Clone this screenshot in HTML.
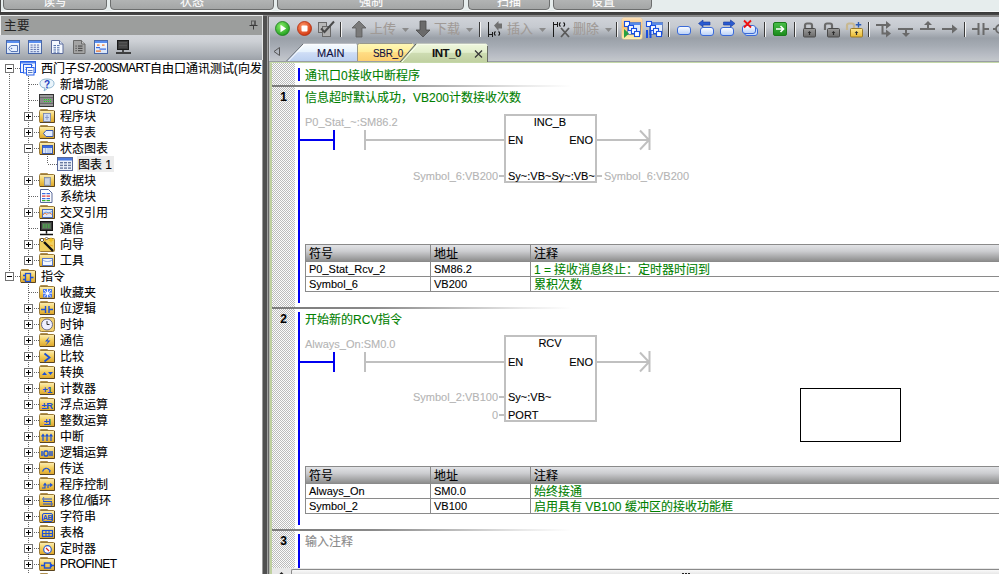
<!DOCTYPE html><html lang="zh-CN"><head><meta charset="utf-8"><style>
*{box-sizing:border-box}
html,body{margin:0;padding:0;width:999px;height:574px;overflow:hidden;background:#e6eded;font-family:"Liberation Sans",sans-serif;font-size:12px;color:#000;-webkit-text-stroke-width:0.1px}
.a{position:absolute}
svg.a{overflow:visible}
.rb{position:absolute;top:-5px;height:15px;border:1px solid #6c6e6e;border-radius:0 0 4px 4px;background:linear-gradient(#b8baba,#a4a6a6);box-shadow:0 1px 0 #f8fafa;color:#fff;font-size:12px;text-align:center;line-height:13px;overflow:hidden}
.t{position:absolute;white-space:nowrap;line-height:16px;height:16px}
.g{color:#008000}
.lg{color:#b4b4b4}
.bx{position:absolute;width:9px;height:9px;border:1px solid #747474;background:#fff}
.bx:before{content:"";position:absolute;left:1px;top:3px;width:5px;height:1px;background:#000}
.bx.p:after{content:"";position:absolute;left:3px;top:1px;width:1px;height:5px;background:#000}
.dv{position:absolute;width:1px;background:repeating-linear-gradient(#666 0 1px,transparent 1px 2px)}
.dh{position:absolute;height:1px;background:repeating-linear-gradient(90deg,#666 0 1px,transparent 1px 2px)}
.hatch{background-color:#f2f2f2;background-image:repeating-conic-gradient(#bcbcbc 0 25%,#fcfcfc 0 50%);background-size:2px 2px}
.rail{position:absolute;left:298px;width:2px;background:#0000f0}
.sep{position:absolute;left:272px;width:727px;height:2px;background:linear-gradient(90deg,#7a7a7a 0px,#8a8a8a 100px,#a0a0a0 140px,#e8e8e8 250px,#fff 300px)}
.num{position:absolute;left:272px;width:23px;text-align:center;font-weight:bold;font-size:12px;line-height:14px}
.box{position:absolute;border:2px solid #c0c0c0;background:#fff}
.wl{position:absolute;height:2px;background:#c0c0c0}
.tb{position:absolute;border-collapse:collapse;font-size:12px}
.tbl{position:absolute;border:1px solid #8a8a8a;background:#fff}
.th{position:absolute;background:linear-gradient(#e2e3e6,#cbcccf 40%,#8e8e8e)}
.cl{position:absolute;background:#8a8a8a}
</style></head><body>
<div class="a" style="left:0;top:0;width:999px;height:11px;background:#e6eded"></div>
<div class="rb" style="left:3px;width:104px">读写</div>
<div class="rb" style="left:110px;width:164px">状态</div>
<div class="rb" style="left:277px;width:187px">强制</div>
<div class="rb" style="left:468px;width:82px">扫描</div>
<div class="rb" style="left:553px;width:99px">设置</div>
<div class="a" style="left:0;top:11px;width:999px;height:1px;background:#f6f8f8"></div>
<div class="a" style="left:0;top:0;width:1px;height:16px;background:#4a4a4a"></div>
<div class="a" style="left:0;top:12px;width:999px;height:3px;background:linear-gradient(#383838,#484848)"></div>
<div class="a" style="left:0;top:15px;width:263px;height:1px;background:#e8eaea"></div>
<div class="a" style="left:263px;top:15px;width:736px;height:2px;background:#888"></div>
<div class="a" style="left:0;top:16px;width:263px;height:558px;background:#fff;overflow:hidden">
<div class="a" style="left:0;top:0;width:263px;height:19px;background:#9c9e9d;border-left:1px solid #f0f0f0"></div>
<div class="t" style="left:4px;top:2px;color:#262626;font-size:12.5px">主要</div>
<svg class="a" style="left:249px;top:4px" width="9" height="10"><rect x="2" y="0.5" width="5" height="4.5" fill="#5a5a5a"/><rect x="3" y="1.5" width="2" height="3" fill="#9c9e9d"/><path d="M0.5 5.5h8M4.5 5.5v4" stroke="#3a3a3a" stroke-width="1"/></svg>
<div class="a" style="left:0;top:19px;width:263px;height:25px;background:linear-gradient(#d2d5da,#cdd0d5 25%,#c0c4c9 45%,#aaafb5 80%,#9ca1a8)"></div>
</div>
<svg class="a" style="left:6px;top:40px" width="14" height="14"><defs><linearGradient id="wb1" x1="0" y1="0" x2="0" y2="1"><stop offset="0" stop-color="#ffffff"/><stop offset="1" stop-color="#d4e2f8"/></linearGradient></defs><rect x="0.5" y="0.5" width="13" height="13" fill="url(#wb1)" stroke="#4a68a8"/><rect x="1" y="1" width="12" height="2" fill="#5a8ef0"/><path d="M2.5 8.5l2.5-3h6.5v6H5z" fill="#e8f0ff" stroke="#5a78b8"/><circle cx="5.5" cy="8.5" r=".8" fill="#5a78b8"/></svg>
<svg class="a" style="left:28px;top:40px" width="14" height="14"><defs><linearGradient id="wb2" x1="0" y1="0" x2="0" y2="1"><stop offset="0" stop-color="#ffffff"/><stop offset="1" stop-color="#d4e2f8"/></linearGradient></defs><rect x="0.5" y="0.5" width="13" height="13" fill="url(#wb2)" stroke="#4a68a8"/><rect x="1" y="1" width="12" height="2" fill="#5a8ef0"/><rect x="2.5" y="4.5" width="2.2" height="1.1" fill="#6a7ab0"/><rect x="5.7" y="4.5" width="2.2" height="1.1" fill="#6a7ab0"/><rect x="8.9" y="4.5" width="2.2" height="1.1" fill="#6a7ab0"/><rect x="2.5" y="6.7" width="2.2" height="1.1" fill="#6a7ab0"/><rect x="5.7" y="6.7" width="2.2" height="1.1" fill="#6a7ab0"/><rect x="8.9" y="6.7" width="2.2" height="1.1" fill="#6a7ab0"/><rect x="2.5" y="8.9" width="2.2" height="1.1" fill="#6a7ab0"/><rect x="5.7" y="8.9" width="2.2" height="1.1" fill="#6a7ab0"/><rect x="8.9" y="8.9" width="2.2" height="1.1" fill="#6a7ab0"/><rect x="2.5" y="11.100000000000001" width="2.2" height="1.1" fill="#6a7ab0"/><rect x="5.7" y="11.100000000000001" width="2.2" height="1.1" fill="#6a7ab0"/><rect x="8.9" y="11.100000000000001" width="2.2" height="1.1" fill="#6a7ab0"/></svg>
<svg class="a" style="left:51px;top:40px" width="13" height="14"><path d="M0.5 0.5h8l3.5 3.5v9.5H0.5z" fill="#f4f8ff" stroke="#5a6a9a"/><path d="M8.5 0.5v3.5h3.5" fill="#dde6f8" stroke="#5a6a9a"/><rect x="2.5" y="5.0" width="2.5" height="1.1" fill="#5a78b0"/><rect x="6.0" y="5.0" width="2.5" height="1.1" fill="#5a78b0"/><rect x="2.5" y="7.2" width="2.5" height="1.1" fill="#5a78b0"/><rect x="6.0" y="7.2" width="2.5" height="1.1" fill="#5a78b0"/><rect x="2.5" y="9.4" width="2.5" height="1.1" fill="#5a78b0"/><rect x="6.0" y="9.4" width="2.5" height="1.1" fill="#5a78b0"/><rect x="2.5" y="11.600000000000001" width="2.5" height="1.1" fill="#5a78b0"/><rect x="6.0" y="11.600000000000001" width="2.5" height="1.1" fill="#5a78b0"/></svg>
<svg class="a" style="left:73px;top:40px" width="13" height="14"><path d="M0.5 0.5h8l3.5 3.5v9.5H0.5z" fill="#a4a4a4" stroke="#6a6a6a"/><path d="M8.5 0.5v3.5h3.5" fill="#c8c8c8" stroke="#6a6a6a"/><rect x="2.5" y="5.5" width="1.2" height="1.1" fill="#4a4a4a"/><rect x="5" y="5.5" width="4.5" height="1.1" fill="#4a4a4a"/><rect x="2.5" y="7.8" width="1.2" height="1.1" fill="#4a4a4a"/><rect x="5" y="7.8" width="4.5" height="1.1" fill="#4a4a4a"/><rect x="2.5" y="10.1" width="1.2" height="1.1" fill="#4a4a4a"/><rect x="5" y="10.1" width="4.5" height="1.1" fill="#4a4a4a"/></svg>
<svg class="a" style="left:94px;top:40px" width="14" height="14"><defs><linearGradient id="wb3" x1="0" y1="0" x2="0" y2="1"><stop offset="0" stop-color="#ffffff"/><stop offset="1" stop-color="#d4e2f8"/></linearGradient></defs><rect x="0.5" y="0.5" width="13" height="13" fill="url(#wb3)" stroke="#4a68a8"/><rect x="1" y="1" width="12" height="2" fill="#5a8ef0"/><rect x="3" y="4.5" width="2.5" height="1.2" fill="#f07020"/><rect x="8" y="4.5" width="2.5" height="1.2" fill="#f07020"/><rect x="2" y="7" width="4" height="1.2" fill="#3a6ae0"/><rect x="5.5" y="8.5" width="6.5" height="1.2" fill="#3a6ae0"/><rect x="2" y="10.5" width="5" height="1.2" fill="#f07020"/></svg>
<svg class="a" style="left:115px;top:40px" width="17" height="14"><rect x="2.5" y="0.5" width="11" height="9" fill="#3a3a3a" stroke="#1a1a1a"/><path d="M4 2.5h8M4 4h8M4 5.5h8M4 7h8" stroke="#6a6a6a" stroke-width=".6"/><path d="M8 10v2M1 13h15" stroke="#1a1a1a" stroke-width="1.4"/></svg>
<div class="dv" style="left:9px;top:74px;height:198px"></div>
<div class="dv" style="left:28px;top:76px;height:184px"></div>
<div class="dv" style="left:28px;top:282px;height:292px"></div>
<div class="dv" style="left:47px;top:154px;height:10px"></div>
<div class="dh" style="left:15px;top:68px;width:5px"></div>
<div class="bx m" style="left:5px;top:64px"></div>
<svg class="a" style="left:20px;top:61px" width="17" height="15"><rect x="0.5" y="0.5" width="15" height="11" fill="#f2f6ff" stroke="#2a62e8"/><rect x="1" y="1" width="14" height="1.5" fill="#5a8af0"/><path d="M9 4.5h4M9 6.5h4" stroke="#8aa8e0"/><rect x="3.5" y="3.5" width="8" height="8.5" fill="#f2f6ff" stroke="#2a62e8"/><path d="M5 6.5h4M5 8.5h4" stroke="#8aa8e0"/><rect x="6.5" y="6.5" width="7.5" height="7.5" fill="#f6f9ff" stroke="#2a62e8"/><path d="M8 9.5h4.5M8 11.5h4.5" stroke="#5a7ac0"/></svg>
<div class="t" style="left:41px;top:61px;font-size:12px">西门子<span style="letter-spacing:-0.7px;position:relative;top:-1px">S7-200SMART</span>自由口通讯测试(向发送</div>
<div class="dh" style="left:29px;top:84px;width:10px"></div>
<svg class="a" style="left:39px;top:78px" width="16" height="14"><path d="M8 1C3 1 1 3 1 5.5S3 10 6 10l-1 3 4-3c4 0 6-2 6-4.5S13 1 8 1z" fill="#eaf4fb" stroke="#8ab4d0"/><text x="8" y="9.5" font-size="10" font-weight="bold" fill="#2440c0" text-anchor="middle" font-family="Liberation Sans">?</text></svg>
<div class="t" style="left:60px;top:77px;font-size:12px">新增功能</div>
<div class="dh" style="left:29px;top:100px;width:10px"></div>
<svg class="a" style="left:39px;top:94px" width="15" height="13"><rect x="0.5" y="0.5" width="14" height="12" fill="#6a6a6a" stroke="#333"/><rect x="1" y="1" width="13" height="2" fill="#9a9a9a"/><rect x="1" y="4" width="13" height="5" fill="#8a8a8a"/><path d="M5 5.5h7M5 7.5h7" stroke="#20e020" stroke-dasharray="1 1"/><rect x="1" y="10" width="13" height="2" fill="#9a9a9a"/></svg>
<div class="t" style="left:60px;top:93px;font-size:12px"><span style="letter-spacing:-0.6px;position:relative;top:-1px">CPU ST20</span></div>
<div class="dh" style="left:34px;top:116px;width:5px"></div>
<div class="bx p" style="left:24px;top:112px"></div>
<svg class="a" style="left:39px;top:109px" width="17" height="15"><defs><linearGradient id="fg1" x1="0" y1="0" x2="0" y2="1"><stop offset="0" stop-color="#fcefb8"/><stop offset=".45" stop-color="#f4d060"/><stop offset="1" stop-color="#dca428"/></linearGradient></defs><path d="M1.5 0.5h7l1 1.5h-8.5z" fill="#f2e4b0" stroke="#b09050" stroke-width="1"/><rect x="0.5" y="1.5" width="15" height="12" rx="1" fill="url(#fg1)" stroke="#9a7a38"/><path d="M1 13.5h14.5V2" stroke="#5a4420" stroke-width="1" fill="none"/><rect x="4.5" y="4.5" width="7" height="8" fill="#d0dcf4" stroke="#7080b0" stroke-width=".8"/><path d="M6 8.5h4M8 6v5" stroke="#8090c0" stroke-width=".8"/></svg>
<div class="t" style="left:60px;top:109px;font-size:12px">程序块</div>
<div class="dh" style="left:34px;top:132px;width:5px"></div>
<div class="bx p" style="left:24px;top:128px"></div>
<svg class="a" style="left:39px;top:125px" width="17" height="15"><defs><linearGradient id="fg2" x1="0" y1="0" x2="0" y2="1"><stop offset="0" stop-color="#fcefb8"/><stop offset=".45" stop-color="#f4d060"/><stop offset="1" stop-color="#dca428"/></linearGradient></defs><path d="M1.5 0.5h7l1 1.5h-8.5z" fill="#f2e4b0" stroke="#b09050" stroke-width="1"/><rect x="0.5" y="1.5" width="15" height="12" rx="1" fill="url(#fg2)" stroke="#9a7a38"/><path d="M1 13.5h14.5V2" stroke="#5a4420" stroke-width="1" fill="none"/><path d="M4.5 8.5l2.5-3h7v6H7z" fill="#e4eeff" stroke="#3a5ab0"/></svg>
<div class="t" style="left:60px;top:125px;font-size:12px">符号表</div>
<div class="dh" style="left:34px;top:148px;width:5px"></div>
<div class="bx m" style="left:24px;top:144px"></div>
<svg class="a" style="left:39px;top:141px" width="17" height="15"><defs><linearGradient id="fg3" x1="0" y1="0" x2="0" y2="1"><stop offset="0" stop-color="#fcefb8"/><stop offset=".45" stop-color="#f4d060"/><stop offset="1" stop-color="#dca428"/></linearGradient></defs><path d="M1.5 0.5h7l1 1.5h-8.5z" fill="#f2e4b0" stroke="#b09050" stroke-width="1"/><rect x="0.5" y="1.5" width="15" height="12" rx="1" fill="url(#fg3)" stroke="#9a7a38"/><path d="M1 13.5h14.5V2" stroke="#5a4420" stroke-width="1" fill="none"/><rect x="3.5" y="4.5" width="10" height="8" fill="#d8e4f8" stroke="#3a5ab0"/><rect x="4" y="5" width="9" height="2" fill="#3a6ae0"/><path d="M6.5 7v5M9 7v5M11 7v5" stroke="#9ab0d8" stroke-width=".8"/></svg>
<div class="t" style="left:60px;top:141px;font-size:12px">状态图表</div>
<div class="dh" style="left:48px;top:164px;width:9px"></div>
<svg class="a" style="left:57px;top:157px" width="16" height="14"><rect x="0.5" y="0.5" width="15" height="13" fill="#eef2fa" stroke="#5a6a9a"/><rect x="1" y="1" width="14" height="2.5" fill="#4a7ae0"/><rect x="3" y="5.0" width="3" height="1.4" fill="#6a7aa0"/><rect x="7" y="5.0" width="3" height="1.4" fill="#6a7aa0"/><rect x="11" y="5.0" width="3" height="1.4" fill="#6a7aa0"/><rect x="3" y="7.7" width="3" height="1.4" fill="#6a7aa0"/><rect x="7" y="7.7" width="3" height="1.4" fill="#6a7aa0"/><rect x="11" y="7.7" width="3" height="1.4" fill="#6a7aa0"/><rect x="3" y="10.4" width="3" height="1.4" fill="#6a7aa0"/><rect x="7" y="10.4" width="3" height="1.4" fill="#6a7aa0"/><rect x="11" y="10.4" width="3" height="1.4" fill="#6a7aa0"/></svg>
<div class="a" style="left:77px;top:156px;width:37px;height:16px;background:#ececec"></div>
<div class="t" style="left:78px;top:157px;font-size:12px">图表 1</div>
<div class="dh" style="left:34px;top:180px;width:5px"></div>
<div class="bx p" style="left:24px;top:176px"></div>
<svg class="a" style="left:39px;top:173px" width="17" height="15"><defs><linearGradient id="fg4" x1="0" y1="0" x2="0" y2="1"><stop offset="0" stop-color="#fcefb8"/><stop offset=".45" stop-color="#f4d060"/><stop offset="1" stop-color="#dca428"/></linearGradient></defs><path d="M1.5 0.5h7l1 1.5h-8.5z" fill="#f2e4b0" stroke="#b09050" stroke-width="1"/><rect x="0.5" y="1.5" width="15" height="12" rx="1" fill="url(#fg4)" stroke="#9a7a38"/><path d="M1 13.5h14.5V2" stroke="#5a4420" stroke-width="1" fill="none"/><rect x="5.5" y="4.5" width="6" height="8" fill="#b8c4d8" stroke="#7a88a8" stroke-width=".8"/><path d="M7 6v5M9 6v5" stroke="#e8eef8" stroke-width=".8"/></svg>
<div class="t" style="left:60px;top:173px;font-size:12px">数据块</div>
<div class="dh" style="left:29px;top:196px;width:10px"></div>
<svg class="a" style="left:40px;top:189px" width="13" height="14"><path d="M0.5 0.5h8l3.5 3.5v9.5H0.5z" fill="#fbfcff" stroke="#5a6a9a"/><rect x="2" y="4" width="3.5" height="1.2" fill="#3a6ae0"/><rect x="6.5" y="4" width="3.5" height="1.2" fill="#3a6ae0"/><rect x="2" y="6.5" width="3.5" height="1.2" fill="#e03030"/><rect x="6.5" y="6.5" width="3.5" height="1.2" fill="#e03030"/><rect x="2" y="9" width="3.5" height="1.2" fill="#3a6ae0"/><rect x="6.5" y="9" width="3.5" height="1.2" fill="#3a6ae0"/><rect x="2" y="11" width="3.5" height="1.2" fill="#30b030"/><rect x="6.5" y="11" width="3.5" height="1.2" fill="#30b030"/></svg>
<div class="t" style="left:60px;top:189px;font-size:12px">系统块</div>
<div class="dh" style="left:34px;top:212px;width:5px"></div>
<div class="bx p" style="left:24px;top:208px"></div>
<svg class="a" style="left:39px;top:205px" width="17" height="15"><defs><linearGradient id="fg5" x1="0" y1="0" x2="0" y2="1"><stop offset="0" stop-color="#fcefb8"/><stop offset=".45" stop-color="#f4d060"/><stop offset="1" stop-color="#dca428"/></linearGradient></defs><path d="M1.5 0.5h7l1 1.5h-8.5z" fill="#f2e4b0" stroke="#b09050" stroke-width="1"/><rect x="0.5" y="1.5" width="15" height="12" rx="1" fill="url(#fg5)" stroke="#9a7a38"/><path d="M1 13.5h14.5V2" stroke="#5a4420" stroke-width="1" fill="none"/><rect x="3.5" y="4.5" width="10" height="8" fill="#dce8fa" stroke="#4a6ab8"/><path d="M4 10l2-2 2 1.5 2-2 3 2" stroke="#f08040" fill="none"/><path d="M4 8.5l3-1.5 3 1 3-1.5" stroke="#4a8ae0" fill="none" stroke-width=".8"/></svg>
<div class="t" style="left:60px;top:205px;font-size:12px">交叉引用</div>
<div class="dh" style="left:29px;top:228px;width:10px"></div>
<svg class="a" style="left:39px;top:221px" width="16" height="15"><rect x="1.5" y="0.5" width="12" height="9" fill="#3a3a3a" stroke="#111"/><rect x="3" y="2" width="9" height="6" fill="#5a6a5a"/><path d="M4 4h7M4 6h7" stroke="#40d040" stroke-dasharray="1.5 1"/><path d="M7.5 10v2.5M1 13.5h13" stroke="#111" stroke-width="1.5"/></svg>
<div class="t" style="left:60px;top:221px;font-size:12px">通信</div>
<div class="dh" style="left:34px;top:244px;width:5px"></div>
<div class="bx p" style="left:24px;top:240px"></div>
<svg class="a" style="left:39px;top:237px" width="16" height="15"><rect x="0.5" y="1.5" width="15" height="13" rx="1" fill="#f0d060" stroke="#9a7a38"/><path d="M5 5l9 9" stroke="#111" stroke-width="2.4"/><path d="M1 3l2-2 2 2-2 2z M6 1.5l1.5-1.5 1.5 1.5-1.5 1.5z" fill="#fff" stroke="#222" stroke-width=".7"/><path d="M12 0l1 2 2 1-2 1-1 2-1-2-2-1 2-1z" fill="#f0c020"/><path d="M5 1l2 3M14 9l-3-1" stroke="#f0a020"/></svg>
<div class="t" style="left:60px;top:237px;font-size:12px">向导</div>
<div class="dh" style="left:34px;top:260px;width:5px"></div>
<div class="bx p" style="left:24px;top:256px"></div>
<svg class="a" style="left:39px;top:253px" width="17" height="15"><defs><linearGradient id="fg6" x1="0" y1="0" x2="0" y2="1"><stop offset="0" stop-color="#fcefb8"/><stop offset=".45" stop-color="#f4d060"/><stop offset="1" stop-color="#dca428"/></linearGradient></defs><path d="M1.5 0.5h7l1 1.5h-8.5z" fill="#f2e4b0" stroke="#b09050" stroke-width="1"/><rect x="0.5" y="1.5" width="15" height="12" rx="1" fill="url(#fg6)" stroke="#9a7a38"/><path d="M1 13.5h14.5V2" stroke="#5a4420" stroke-width="1" fill="none"/><rect x="3.5" y="5.5" width="10" height="7" fill="#f4f8ff" stroke="#5a7ac8"/><path d="M4 7c2 2 7 2 9 0" stroke="#8aa8e0" fill="none"/></svg>
<div class="t" style="left:60px;top:253px;font-size:12px">工具</div>
<div class="dh" style="left:15px;top:276px;width:5px"></div>
<div class="bx m" style="left:5px;top:272px"></div>
<svg class="a" style="left:20px;top:269px" width="17" height="15"><defs><linearGradient id="fg7" x1="0" y1="0" x2="0" y2="1"><stop offset="0" stop-color="#fcefb8"/><stop offset=".45" stop-color="#f4d060"/><stop offset="1" stop-color="#dca428"/></linearGradient></defs><path d="M1.5 0.5h7l1 1.5h-8.5z" fill="#f2e4b0" stroke="#b09050" stroke-width="1"/><rect x="0.5" y="1.5" width="15" height="12" rx="1" fill="url(#fg7)" stroke="#9a7a38"/><path d="M1 13.5h14.5V2" stroke="#5a4420" stroke-width="1" fill="none"/><path d="M3 6.5h2.5M3 10.5h2.5M10.5 8.5h3" stroke="#1a50d8" stroke-width="1.3"/><rect x="5.5" y="4.5" width="5" height="8" fill="none" stroke="#1a50d8" stroke-width="1.3"/></svg>
<div class="t" style="left:41px;top:269px;font-size:12px">指令</div>
<div class="dh" style="left:29px;top:292px;width:10px"></div>
<svg class="a" style="left:39px;top:285px" width="17" height="15"><defs><linearGradient id="fg8" x1="0" y1="0" x2="0" y2="1"><stop offset="0" stop-color="#fcefb8"/><stop offset=".45" stop-color="#f4d060"/><stop offset="1" stop-color="#dca428"/></linearGradient></defs><path d="M1.5 0.5h7l1 1.5h-8.5z" fill="#f2e4b0" stroke="#b09050" stroke-width="1"/><rect x="0.5" y="1.5" width="15" height="12" rx="1" fill="url(#fg8)" stroke="#9a7a38"/><path d="M1 13.5h14.5V2" stroke="#5a4420" stroke-width="1" fill="none"/><rect x="4" y="4" width="9" height="8.5" fill="#4a7af0"/><path d="M8.5 4v8.5M4 8.2h9M5 5l7 6.5M12 5l-7 6.5" stroke="#e8f0ff" stroke-width="1"/><circle cx="8.5" cy="8.2" r="1.5" fill="#fff"/></svg>
<div class="t" style="left:60px;top:285px;font-size:12px">收藏夹</div>
<div class="dh" style="left:34px;top:308px;width:5px"></div>
<div class="bx p" style="left:24px;top:304px"></div>
<svg class="a" style="left:39px;top:301px" width="17" height="15"><defs><linearGradient id="fg9" x1="0" y1="0" x2="0" y2="1"><stop offset="0" stop-color="#fcefb8"/><stop offset=".45" stop-color="#f4d060"/><stop offset="1" stop-color="#dca428"/></linearGradient></defs><path d="M1.5 0.5h7l1 1.5h-8.5z" fill="#f2e4b0" stroke="#b09050" stroke-width="1"/><rect x="0.5" y="1.5" width="15" height="12" rx="1" fill="url(#fg9)" stroke="#9a7a38"/><path d="M1 13.5h14.5V2" stroke="#5a4420" stroke-width="1" fill="none"/><path d="M2 8.5h4.5M6.5 5v7M10 5v7M10 8.5h4" stroke="#1a50d8" stroke-width="1.4"/></svg>
<div class="t" style="left:60px;top:301px;font-size:12px">位逻辑</div>
<div class="dh" style="left:34px;top:324px;width:5px"></div>
<div class="bx p" style="left:24px;top:320px"></div>
<svg class="a" style="left:39px;top:317px" width="16" height="15"><rect x="0.5" y="0.5" width="15" height="14" rx="2" fill="#f0d070" stroke="#9a7a38"/><circle cx="8" cy="7.5" r="5.5" fill="#eef0ff" stroke="#6a6a8a"/><path d="M8 4v3.5h2.5" stroke="#333" stroke-width="1" fill="none"/></svg>
<div class="t" style="left:60px;top:317px;font-size:12px">时钟</div>
<div class="dh" style="left:34px;top:340px;width:5px"></div>
<div class="bx p" style="left:24px;top:336px"></div>
<svg class="a" style="left:39px;top:333px" width="17" height="15"><defs><linearGradient id="fg10" x1="0" y1="0" x2="0" y2="1"><stop offset="0" stop-color="#fcefb8"/><stop offset=".45" stop-color="#f4d060"/><stop offset="1" stop-color="#dca428"/></linearGradient></defs><path d="M1.5 0.5h7l1 1.5h-8.5z" fill="#f2e4b0" stroke="#b09050" stroke-width="1"/><rect x="0.5" y="1.5" width="15" height="12" rx="1" fill="url(#fg10)" stroke="#9a7a38"/><path d="M1 13.5h14.5V2" stroke="#5a4420" stroke-width="1" fill="none"/><path d="M10.5 3.5L6 8.5h3l-2.5 4 5-5h-3z" fill="#1a50d8"/></svg>
<div class="t" style="left:60px;top:333px;font-size:12px">通信</div>
<div class="dh" style="left:34px;top:356px;width:5px"></div>
<div class="bx p" style="left:24px;top:352px"></div>
<svg class="a" style="left:39px;top:349px" width="17" height="15"><defs><linearGradient id="fg11" x1="0" y1="0" x2="0" y2="1"><stop offset="0" stop-color="#fcefb8"/><stop offset=".45" stop-color="#f4d060"/><stop offset="1" stop-color="#dca428"/></linearGradient></defs><path d="M1.5 0.5h7l1 1.5h-8.5z" fill="#f2e4b0" stroke="#b09050" stroke-width="1"/><rect x="0.5" y="1.5" width="15" height="12" rx="1" fill="url(#fg11)" stroke="#9a7a38"/><path d="M1 13.5h14.5V2" stroke="#5a4420" stroke-width="1" fill="none"/><path d="M5.5 4.5l5 4-5 4" stroke="#1a50d8" stroke-width="1.8" fill="none"/></svg>
<div class="t" style="left:60px;top:349px;font-size:12px">比较</div>
<div class="dh" style="left:34px;top:372px;width:5px"></div>
<div class="bx p" style="left:24px;top:368px"></div>
<svg class="a" style="left:39px;top:365px" width="17" height="15"><defs><linearGradient id="fg12" x1="0" y1="0" x2="0" y2="1"><stop offset="0" stop-color="#fcefb8"/><stop offset=".45" stop-color="#f4d060"/><stop offset="1" stop-color="#dca428"/></linearGradient></defs><path d="M1.5 0.5h7l1 1.5h-8.5z" fill="#f2e4b0" stroke="#b09050" stroke-width="1"/><rect x="0.5" y="1.5" width="15" height="12" rx="1" fill="url(#fg12)" stroke="#9a7a38"/><path d="M1 13.5h14.5V2" stroke="#5a4420" stroke-width="1" fill="none"/><path d="M3 10l2.5-3 2.5 3z M9 7l2.5 3 2.5-3z" fill="#1a50d8"/></svg>
<div class="t" style="left:60px;top:365px;font-size:12px">转换</div>
<div class="dh" style="left:34px;top:388px;width:5px"></div>
<div class="bx p" style="left:24px;top:384px"></div>
<svg class="a" style="left:39px;top:381px" width="17" height="15"><defs><linearGradient id="fg13" x1="0" y1="0" x2="0" y2="1"><stop offset="0" stop-color="#fcefb8"/><stop offset=".45" stop-color="#f4d060"/><stop offset="1" stop-color="#dca428"/></linearGradient></defs><path d="M1.5 0.5h7l1 1.5h-8.5z" fill="#f2e4b0" stroke="#b09050" stroke-width="1"/><rect x="0.5" y="1.5" width="15" height="12" rx="1" fill="url(#fg13)" stroke="#9a7a38"/><path d="M1 13.5h14.5V2" stroke="#5a4420" stroke-width="1" fill="none"/><text x="8" y="12" font-size="9.5" fill="#1a50d8" text-anchor="middle" font-family="Liberation Sans" font-weight="bold" letter-spacing="-.6" stroke="none">+1</text></svg>
<div class="t" style="left:60px;top:381px;font-size:12px">计数器</div>
<div class="dh" style="left:34px;top:404px;width:5px"></div>
<div class="bx p" style="left:24px;top:400px"></div>
<svg class="a" style="left:39px;top:397px" width="17" height="15"><defs><linearGradient id="fg14" x1="0" y1="0" x2="0" y2="1"><stop offset="0" stop-color="#fcefb8"/><stop offset=".45" stop-color="#f4d060"/><stop offset="1" stop-color="#dca428"/></linearGradient></defs><path d="M1.5 0.5h7l1 1.5h-8.5z" fill="#f2e4b0" stroke="#b09050" stroke-width="1"/><rect x="0.5" y="1.5" width="15" height="12" rx="1" fill="url(#fg14)" stroke="#9a7a38"/><path d="M1 13.5h14.5V2" stroke="#5a4420" stroke-width="1" fill="none"/><text x="8" y="12" font-size="9.5" fill="#1a50d8" text-anchor="middle" font-family="Liberation Sans" font-weight="bold" letter-spacing="-.6" stroke="none">±R</text></svg>
<div class="t" style="left:60px;top:397px;font-size:12px">浮点运算</div>
<div class="dh" style="left:34px;top:420px;width:5px"></div>
<div class="bx p" style="left:24px;top:416px"></div>
<svg class="a" style="left:39px;top:413px" width="17" height="15"><defs><linearGradient id="fg15" x1="0" y1="0" x2="0" y2="1"><stop offset="0" stop-color="#fcefb8"/><stop offset=".45" stop-color="#f4d060"/><stop offset="1" stop-color="#dca428"/></linearGradient></defs><path d="M1.5 0.5h7l1 1.5h-8.5z" fill="#f2e4b0" stroke="#b09050" stroke-width="1"/><rect x="0.5" y="1.5" width="15" height="12" rx="1" fill="url(#fg15)" stroke="#9a7a38"/><path d="M1 13.5h14.5V2" stroke="#5a4420" stroke-width="1" fill="none"/><text x="8" y="12" font-size="9.5" fill="#1a50d8" text-anchor="middle" font-family="Liberation Sans" font-weight="bold" letter-spacing="-.6" stroke="none">±I</text></svg>
<div class="t" style="left:60px;top:413px;font-size:12px">整数运算</div>
<div class="dh" style="left:34px;top:436px;width:5px"></div>
<div class="bx p" style="left:24px;top:432px"></div>
<svg class="a" style="left:39px;top:429px" width="17" height="15"><defs><linearGradient id="fg16" x1="0" y1="0" x2="0" y2="1"><stop offset="0" stop-color="#fcefb8"/><stop offset=".45" stop-color="#f4d060"/><stop offset="1" stop-color="#dca428"/></linearGradient></defs><path d="M1.5 0.5h7l1 1.5h-8.5z" fill="#f2e4b0" stroke="#b09050" stroke-width="1"/><rect x="0.5" y="1.5" width="15" height="12" rx="1" fill="url(#fg16)" stroke="#9a7a38"/><path d="M1 13.5h14.5V2" stroke="#5a4420" stroke-width="1" fill="none"/><path d="M4 12V6M2.5 7.5L4 5.5l1.5 2M8 12V6M6.5 7.5L8 5.5l1.5 2M12 12V6M10.5 7.5L12 5.5l1.5 2" stroke="#1a50d8" stroke-width="1.2" fill="none"/></svg>
<div class="t" style="left:60px;top:429px;font-size:12px">中断</div>
<div class="dh" style="left:34px;top:452px;width:5px"></div>
<div class="bx p" style="left:24px;top:448px"></div>
<svg class="a" style="left:39px;top:445px" width="17" height="15"><defs><linearGradient id="fg17" x1="0" y1="0" x2="0" y2="1"><stop offset="0" stop-color="#fcefb8"/><stop offset=".45" stop-color="#f4d060"/><stop offset="1" stop-color="#dca428"/></linearGradient></defs><path d="M1.5 0.5h7l1 1.5h-8.5z" fill="#f2e4b0" stroke="#b09050" stroke-width="1"/><rect x="0.5" y="1.5" width="15" height="12" rx="1" fill="url(#fg17)" stroke="#9a7a38"/><path d="M1 13.5h14.5V2" stroke="#5a4420" stroke-width="1" fill="none"/><path d="M3 6v5M11 6v5M13 6v5" stroke="#1a50d8" stroke-width="1.4"/><rect x="5" y="6" width="4" height="5" rx="1.5" fill="none" stroke="#1a50d8" stroke-width="1.4"/></svg>
<div class="t" style="left:60px;top:445px;font-size:12px">逻辑运算</div>
<div class="dh" style="left:34px;top:468px;width:5px"></div>
<div class="bx p" style="left:24px;top:464px"></div>
<svg class="a" style="left:39px;top:461px" width="17" height="15"><defs><linearGradient id="fg18" x1="0" y1="0" x2="0" y2="1"><stop offset="0" stop-color="#fcefb8"/><stop offset=".45" stop-color="#f4d060"/><stop offset="1" stop-color="#dca428"/></linearGradient></defs><path d="M1.5 0.5h7l1 1.5h-8.5z" fill="#f2e4b0" stroke="#b09050" stroke-width="1"/><rect x="0.5" y="1.5" width="15" height="12" rx="1" fill="url(#fg18)" stroke="#9a7a38"/><path d="M1 13.5h14.5V2" stroke="#5a4420" stroke-width="1" fill="none"/><path d="M3.5 10.5c1.5-4 5-4 7-1.5M9 8l2 1.5-.5 2" stroke="#1a50d8" stroke-width="1.2" fill="none"/></svg>
<div class="t" style="left:60px;top:461px;font-size:12px">传送</div>
<div class="dh" style="left:34px;top:484px;width:5px"></div>
<div class="bx p" style="left:24px;top:480px"></div>
<svg class="a" style="left:39px;top:477px" width="17" height="15"><defs><linearGradient id="fg19" x1="0" y1="0" x2="0" y2="1"><stop offset="0" stop-color="#fcefb8"/><stop offset=".45" stop-color="#f4d060"/><stop offset="1" stop-color="#dca428"/></linearGradient></defs><path d="M1.5 0.5h7l1 1.5h-8.5z" fill="#f2e4b0" stroke="#b09050" stroke-width="1"/><rect x="0.5" y="1.5" width="15" height="12" rx="1" fill="url(#fg19)" stroke="#9a7a38"/><path d="M1 13.5h14.5V2" stroke="#5a4420" stroke-width="1" fill="none"/><path d="M3 11h3V7M4.5 8.5L6 6.5l1.5 2M9 11V8h3M11 6.5l2 1.5-2 1.5" stroke="#1a50d8" stroke-width="1.1" fill="none"/></svg>
<div class="t" style="left:60px;top:477px;font-size:12px">程序控制</div>
<div class="dh" style="left:34px;top:500px;width:5px"></div>
<div class="bx p" style="left:24px;top:496px"></div>
<svg class="a" style="left:39px;top:493px" width="17" height="15"><defs><linearGradient id="fg20" x1="0" y1="0" x2="0" y2="1"><stop offset="0" stop-color="#fcefb8"/><stop offset=".45" stop-color="#f4d060"/><stop offset="1" stop-color="#dca428"/></linearGradient></defs><path d="M1.5 0.5h7l1 1.5h-8.5z" fill="#f2e4b0" stroke="#b09050" stroke-width="1"/><rect x="0.5" y="1.5" width="15" height="12" rx="1" fill="url(#fg20)" stroke="#9a7a38"/><path d="M1 13.5h14.5V2" stroke="#5a4420" stroke-width="1" fill="none"/><path d="M4 6h9M4 8.5h9M4 11h9" stroke="#1a50d8" stroke-width="1"/><path d="M5 4l-1.5 2 1.5 2M12 9l1.5 2-1.5 2" stroke="#1a50d8" stroke-width=".8" fill="none"/></svg>
<div class="t" style="left:60px;top:493px;font-size:12px">移位/循环</div>
<div class="dh" style="left:34px;top:516px;width:5px"></div>
<div class="bx p" style="left:24px;top:512px"></div>
<svg class="a" style="left:39px;top:509px" width="17" height="15"><defs><linearGradient id="fg21" x1="0" y1="0" x2="0" y2="1"><stop offset="0" stop-color="#fcefb8"/><stop offset=".45" stop-color="#f4d060"/><stop offset="1" stop-color="#dca428"/></linearGradient></defs><path d="M1.5 0.5h7l1 1.5h-8.5z" fill="#f2e4b0" stroke="#b09050" stroke-width="1"/><rect x="0.5" y="1.5" width="15" height="12" rx="1" fill="url(#fg21)" stroke="#9a7a38"/><path d="M1 13.5h14.5V2" stroke="#5a4420" stroke-width="1" fill="none"/><rect x="3.5" y="4.5" width="10" height="8" rx="1.5" fill="none" stroke="#1a50d8" stroke-width="1"/><text x="8.5" y="11.2" font-size="7" fill="#1a50d8" text-anchor="middle" font-family="Liberation Sans" font-weight="bold" letter-spacing="-.4" stroke="none">AB</text></svg>
<div class="t" style="left:60px;top:509px;font-size:12px">字符串</div>
<div class="dh" style="left:34px;top:532px;width:5px"></div>
<div class="bx p" style="left:24px;top:528px"></div>
<svg class="a" style="left:39px;top:525px" width="17" height="15"><defs><linearGradient id="fg22" x1="0" y1="0" x2="0" y2="1"><stop offset="0" stop-color="#fcefb8"/><stop offset=".45" stop-color="#f4d060"/><stop offset="1" stop-color="#dca428"/></linearGradient></defs><path d="M1.5 0.5h7l1 1.5h-8.5z" fill="#f2e4b0" stroke="#b09050" stroke-width="1"/><rect x="0.5" y="1.5" width="15" height="12" rx="1" fill="url(#fg22)" stroke="#9a7a38"/><path d="M1 13.5h14.5V2" stroke="#5a4420" stroke-width="1" fill="none"/><rect x="3.5" y="5.5" width="10" height="6" fill="none" stroke="#1a50d8" stroke-width="1.2"/><path d="M4 8.5h9M7 6v5M10 6v5" stroke="#1a50d8" stroke-width="1"/></svg>
<div class="t" style="left:60px;top:525px;font-size:12px">表格</div>
<div class="dh" style="left:34px;top:548px;width:5px"></div>
<div class="bx p" style="left:24px;top:544px"></div>
<svg class="a" style="left:39px;top:541px" width="17" height="15"><defs><linearGradient id="fg23" x1="0" y1="0" x2="0" y2="1"><stop offset="0" stop-color="#fcefb8"/><stop offset=".45" stop-color="#f4d060"/><stop offset="1" stop-color="#dca428"/></linearGradient></defs><path d="M1.5 0.5h7l1 1.5h-8.5z" fill="#f2e4b0" stroke="#b09050" stroke-width="1"/><rect x="0.5" y="1.5" width="15" height="12" rx="1" fill="url(#fg23)" stroke="#9a7a38"/><path d="M1 13.5h14.5V2" stroke="#5a4420" stroke-width="1" fill="none"/><circle cx="8.5" cy="8.5" r="3.8" fill="#fff" stroke="#2a5ad0" stroke-width="1.2"/><path d="M7 7l3 3" stroke="#e02020" stroke-width="1.2"/></svg>
<div class="t" style="left:60px;top:541px;font-size:12px">定时器</div>
<div class="dh" style="left:34px;top:564px;width:5px"></div>
<div class="bx p" style="left:24px;top:560px"></div>
<svg class="a" style="left:39px;top:557px" width="17" height="15"><defs><linearGradient id="fg24" x1="0" y1="0" x2="0" y2="1"><stop offset="0" stop-color="#fcefb8"/><stop offset=".45" stop-color="#f4d060"/><stop offset="1" stop-color="#dca428"/></linearGradient></defs><path d="M1.5 0.5h7l1 1.5h-8.5z" fill="#f2e4b0" stroke="#b09050" stroke-width="1"/><rect x="0.5" y="1.5" width="15" height="12" rx="1" fill="url(#fg24)" stroke="#9a7a38"/><path d="M1 13.5h14.5V2" stroke="#5a4420" stroke-width="1" fill="none"/><path d="M2 8.5h3M12 8.5h3" stroke="#1a50d8" stroke-width="1.4"/><rect x="5.5" y="6" width="6" height="5" fill="none" stroke="#1a50d8" stroke-width="1.4"/><rect x="11" y="7" width="2" height="3" fill="#1a50d8"/></svg>
<div class="t" style="left:60px;top:557px;font-size:12px"><span style="letter-spacing:-0.5px;position:relative;top:-1px">PROFINET</span></div>
<div class="dh" style="left:34px;top:580px;width:5px"></div>
<div class="bx p" style="left:24px;top:576px"></div>
<svg class="a" style="left:39px;top:573px" width="17" height="15"><defs><linearGradient id="fg25" x1="0" y1="0" x2="0" y2="1"><stop offset="0" stop-color="#fcefb8"/><stop offset=".45" stop-color="#f4d060"/><stop offset="1" stop-color="#dca428"/></linearGradient></defs><path d="M1.5 0.5h7l1 1.5h-8.5z" fill="#f2e4b0" stroke="#b09050" stroke-width="1"/><rect x="0.5" y="1.5" width="15" height="12" rx="1" fill="url(#fg25)" stroke="#9a7a38"/><path d="M1 13.5h14.5V2" stroke="#5a4420" stroke-width="1" fill="none"/><rect x="3.5" y="4.5" width="10" height="7.5" fill="#e8f0ff" stroke="#7a8ab8" stroke-width=".8"/><path d="M4 11l3-3 2 2 2-2 2 3z" fill="#a8c0e8"/></svg>
<div class="a" style="left:262px;top:16px;width:1px;height:558px;background:#9a9a9a"></div>
<div class="a" style="left:262px;top:16px;width:1px;height:44px;background:#e6e8e8"></div>
<div class="a" style="left:263px;top:16px;width:4px;height:558px;background:#505050"></div>
<div class="a" style="left:267px;top:16px;width:1px;height:558px;background:#a0a0a0"></div>
<div class="a" style="left:268px;top:16px;width:1px;height:558px;background:#666"></div>
<div class="a" style="left:269px;top:17px;width:730px;height:44px;background:linear-gradient(#d0d3d9,#c6cad0 23%,#9aa0a8 48%,#a4aab2 64%,#b8bcc4 86%,#c4c8cc);border-left:1px solid #d0d4da"></div>
<svg class="a" style="left:275px;top:21px" width="15" height="15"><defs><radialGradient id="gr" cx=".4" cy=".35" r=".7"><stop offset="0" stop-color="#8af06a"/><stop offset="1" stop-color="#1a9a1a"/></radialGradient></defs><circle cx="7.5" cy="7.5" r="7" fill="url(#gr)" stroke="#1a7a1a" stroke-width=".8"/><path d="M5.5 3.8v7.4L11.2 7.5z" fill="#fff"/></svg>
<svg class="a" style="left:297px;top:21px" width="15" height="15"><defs><radialGradient id="rr" cx=".4" cy=".35" r=".7"><stop offset="0" stop-color="#ff9a6a"/><stop offset="1" stop-color="#d0300a"/></radialGradient></defs><circle cx="7.5" cy="7.5" r="7" fill="url(#rr)" stroke="#b02a0a" stroke-width=".8"/><rect x="4.5" y="4.5" width="6" height="6" rx="1" fill="#fff"/></svg>
<svg class="a" style="left:318px;top:20px" width="17" height="18"><rect x="0.5" y="2.5" width="8" height="10" fill="#b8b8b8" stroke="#6a6a6a"/><rect x="4.5" y="6.5" width="8" height="10" fill="#b0b0b0" stroke="#6a6a6a"/><path d="M3 8.5l3.5 3.5L16 1.5" fill="none" stroke="#4a4a4a" stroke-width="2"/></svg>
<div class="a" style="left:340px;top:22px;width:1px;height:15px;background:#3a3a3a"></div><div class="a" style="left:341px;top:22px;width:1px;height:15px;background:#f4f4f4"></div>
<svg class="a" style="left:351px;top:20px" width="16" height="18"><path d="M8 1L1 8h4v9h6V8h4z" fill="#7a7a7a" stroke="#5a5a5a" stroke-width=".8"/></svg>
<div class="t" style="left:370px;top:21px;color:#a09a96;font-size:13px">上传</div>
<svg class="a" style="left:402px;top:28px" width="7" height="4"><path d="M0 0h7L3.5 4z" fill="#8a8a8a"/></svg>
<svg class="a" style="left:415px;top:20px" width="16" height="18"><path d="M8 17L1 10h4V1h6v9h4z" fill="#6a6a6a" stroke="#4a4a4a" stroke-width=".8"/></svg>
<div class="t" style="left:434px;top:21px;color:#a09a96;font-size:13px">下载</div>
<svg class="a" style="left:466px;top:28px" width="7" height="4"><path d="M0 0h7L3.5 4z" fill="#8a8a8a"/></svg>
<div class="a" style="left:479px;top:22px;width:1px;height:15px;background:#3a3a3a"></div><div class="a" style="left:480px;top:22px;width:1px;height:15px;background:#f4f4f4"></div>
<svg class="a" style="left:488px;top:20px" width="18" height="18"><path d="M0.5 2v15M1 14.5h4M4.5 12v5" stroke="#1a1a1a" stroke-width="1" fill="none"/><path d="M7.5 11.5c-1.5 1-1.5 3 0 4M10.5 11.5c1.5 1 1.5 3 0 4" stroke="#1a1a1a" stroke-width="1.2" fill="none"/><path d="M6 5.5L10.5 1v2.5h3.5v5h-3.5V11z" fill="#707070"/></svg>
<div class="t" style="left:507px;top:21px;color:#a09a96;font-size:13px">插入</div>
<svg class="a" style="left:539px;top:28px" width="7" height="4"><path d="M0 0h7L3.5 4z" fill="#8a8a8a"/></svg>
<svg class="a" style="left:553px;top:20px" width="18" height="18"><path d="M0.5 2v15M1 4.5h4M4.5 2v5" stroke="#1a1a1a" stroke-width="1" fill="none"/><path d="M7.5 2.5c-1.5 1-1.5 3 0 4M10.5 2.5c1.5 1 1.5 3 0 4" stroke="#1a1a1a" stroke-width="1.2" fill="none"/><path d="M8 17l8-9M8 8l8 9" stroke="#5a5a5a" stroke-width="1.8"/></svg>
<div class="t" style="left:573px;top:21px;color:#a09a96;font-size:13px">删除</div>
<svg class="a" style="left:605px;top:28px" width="7" height="4"><path d="M0 0h7L3.5 4z" fill="#8a8a8a"/></svg>
<div class="a" style="left:616px;top:22px;width:1px;height:15px;background:#3a3a3a"></div><div class="a" style="left:617px;top:22px;width:1px;height:15px;background:#f4f4f4"></div>
<div class="a" style="left:622px;top:18px;width:20px;height:21px;border-radius:2px;background:linear-gradient(#fde0b8,#f9c070 40%,#fbd890 70%,#fef0b0);box-shadow:0 0 0 0.5px #e8c890"></div>
<svg class="a" style="left:624px;top:21px" width="17" height="16"><rect x="3.5" y="1.5" width="13" height="12" fill="#e4ecfa" stroke="#2a4a90" stroke-width=".6"/><rect x="3.5" y="1.5" width="13" height="2.5" fill="#5a8ae8"/><rect x="0.5" y="0.5" width="5" height="5" fill="#fff" stroke="#1a50e0" stroke-width="1.1"/><rect x="4.5" y="4.5" width="5" height="5" fill="#fff" stroke="#1a50e0" stroke-width="1.1"/><rect x="7.5" y="7.5" width="5" height="5" fill="#fff" stroke="#1a50e0" stroke-width="1.1"/><rect x="10.5" y="10.5" width="5" height="5" fill="#fff" stroke="#1a50e0" stroke-width="1.1"/></svg>
<svg class="a" style="left:624px;top:29px" width="5" height="9"><path d="M0 0l5 4.5L0 9z" fill="#28a040"/></svg>
<svg class="a" style="left:646px;top:21px" width="17" height="16"><rect x="3.5" y="1.5" width="13" height="12" fill="#e4ecfa" stroke="#2a4a90" stroke-width=".6"/><rect x="3.5" y="1.5" width="13" height="2.5" fill="#5a8ae8"/><rect x="0.5" y="0.5" width="5" height="5" fill="#fff" stroke="#1a50e0" stroke-width="1.1"/><rect x="4.5" y="4.5" width="5" height="5" fill="#fff" stroke="#1a50e0" stroke-width="1.1"/><rect x="7.5" y="7.5" width="5" height="5" fill="#fff" stroke="#1a50e0" stroke-width="1.1"/><rect x="10.5" y="10.5" width="5" height="5" fill="#fff" stroke="#1a50e0" stroke-width="1.1"/></svg>
<svg class="a" style="left:646px;top:30px" width="6" height="8"><path d="M1 0v8M4.5 0v8" stroke="#1a50e0" stroke-width="2"/></svg>
<div class="a" style="left:668px;top:22px;width:1px;height:15px;background:#3a3a3a"></div><div class="a" style="left:669px;top:22px;width:1px;height:15px;background:#f4f4f4"></div>
<svg class="a" style="left:676px;top:20px" width="17" height="16"><defs><linearGradient id="bub" x1="0" y1="0" x2="0" y2="1"><stop offset="0" stop-color="#ffffff"/><stop offset="1" stop-color="#b8d0f8"/></linearGradient></defs><rect x="1.5" y="6.5" width="13" height="8" rx="2.5" fill="url(#bub)" stroke="#3a6ad8" stroke-width="1"/></svg>
<svg class="a" style="left:698px;top:20px" width="17" height="16"><defs><linearGradient id="bub" x1="0" y1="0" x2="0" y2="1"><stop offset="0" stop-color="#ffffff"/><stop offset="1" stop-color="#b8d0f8"/></linearGradient></defs><rect x="2.5" y="7.5" width="13" height="8" rx="2.5" fill="url(#bub)" stroke="#3a6ad8" stroke-width="1"/><path d="M0.5 3.5L5 0v2h7v3H5v2z" fill="#2a5ad0" stroke="#1a3a9a" stroke-width=".6"/></svg>
<svg class="a" style="left:719px;top:20px" width="17" height="16"><defs><linearGradient id="bub" x1="0" y1="0" x2="0" y2="1"><stop offset="0" stop-color="#ffffff"/><stop offset="1" stop-color="#b8d0f8"/></linearGradient></defs><rect x="1.5" y="7.5" width="13" height="8" rx="2.5" fill="url(#bub)" stroke="#3a6ad8" stroke-width="1"/><path d="M16 3.5L11.5 0v2h-7v3h7v2z" fill="#2a5ad0" stroke="#1a3a9a" stroke-width=".6"/></svg>
<svg class="a" style="left:741px;top:19px" width="18" height="18"><rect x="3.5" y="8.5" width="13" height="8" rx="2.5" fill="#c8dcfa" stroke="#3a6ad8"/><rect x="1.5" y="6.5" width="13" height="8" rx="2.5" fill="url(#bub)" stroke="#3a6ad8"/><path d="M3 1.5l7 7M10 1.5L3 8.5" stroke="#f01010" stroke-width="1.8"/></svg>
<div class="a" style="left:764px;top:22px;width:1px;height:15px;background:#3a3a3a"></div><div class="a" style="left:765px;top:22px;width:1px;height:15px;background:#f4f4f4"></div>
<svg class="a" style="left:773px;top:22px" width="14" height="14"><defs><linearGradient id="grn" x1="0" y1="0" x2="0" y2="1"><stop offset="0" stop-color="#4ac04a"/><stop offset="1" stop-color="#1a8a1a"/></linearGradient></defs><rect x="0.5" y="0.5" width="13" height="13" rx="1.5" fill="url(#grn)" stroke="#1a7a1a"/><path d="M3 7h7.5M7.5 4L10.5 7 7.5 10" stroke="#fff" stroke-width="1.6" fill="none"/></svg>
<div class="a" style="left:794px;top:22px;width:1px;height:15px;background:#3a3a3a"></div><div class="a" style="left:795px;top:22px;width:1px;height:15px;background:#f4f4f4"></div>
<svg class="a" style="left:803px;top:22px" width="17" height="17"><defs><linearGradient id="lk803" x1="0" y1="0" x2="0" y2="1"><stop offset="0" stop-color="#9a9a9a"/><stop offset="1" stop-color="#6a6a6a"/></linearGradient></defs><path d="M2 8V3.5a2 2 0 0 1 2-2h3a2 2 0 0 1 2 2V6" stroke="#6a6a6a" stroke-width="2.2" fill="none"/><rect x="0.5" y="6.5" width="12" height="8.5" rx="1" fill="url(#lk803)" stroke="#4a4a4a"/><path d="M6.5 9l-1.8 2h1.2v2h1.2v-2h1.2z" fill="#2a2a2a"/></svg>
<svg class="a" style="left:824px;top:22px" width="17" height="17"><defs><linearGradient id="lk824" x1="0" y1="0" x2="0" y2="1"><stop offset="0" stop-color="#9a9a9a"/><stop offset="1" stop-color="#6a6a6a"/></linearGradient></defs><path d="M1 8V3.5a2 2 0 0 1 2-2h3a2 2 0 0 1 2 2V6" stroke="#6a6a6a" stroke-width="2.2" fill="none"/><rect x="3.5" y="6.5" width="12" height="8.5" rx="1" fill="url(#lk824)" stroke="#4a4a4a"/><path d="M9.5 9l-1.8 2h1.2v2h1.2v-2h1.2z" fill="#2a2a2a"/></svg>
<svg class="a" style="left:846px;top:22px" width="17" height="17"><defs><linearGradient id="lk846" x1="0" y1="0" x2="0" y2="1"><stop offset="0" stop-color="#fde890"/><stop offset="1" stop-color="#e8b830"/></linearGradient></defs><path d="M1 8V3.5a2 2 0 0 1 2-2h3a2 2 0 0 1 2 2V6" stroke="#c8b890" stroke-width="2.2" fill="none"/><rect x="4.5" y="6.5" width="12" height="8.5" rx="1" fill="url(#lk846)" stroke="#9a7a28"/><path d="M10.5 9l-1.8 2h1.2v2h1.2v-2h1.2z" fill="#2a2a2a"/><path d="M12.5 0v5.5M9.75 2.75h5.5" stroke="#2a5ab0" stroke-width="1.4"/></svg>
<div class="a" style="left:868px;top:22px;width:1px;height:15px;background:#3a3a3a"></div><div class="a" style="left:869px;top:22px;width:1px;height:15px;background:#f4f4f4"></div>
<svg class="a" style="left:876px;top:20px" width="17" height="18"><path d="M0 5h10M6.5 5v8.5h4" stroke="#6a6a6a" stroke-width="2" fill="none"/><path d="M10 1l5 4-5 4z M10 9.5l5 4-5 4z" fill="#6a6a6a"/></svg>
<svg class="a" style="left:898px;top:24px" width="16" height="14"><path d="M0 5h15M8 5v5" stroke="#6a6a6a" stroke-width="2" fill="none"/><path d="M4 9h8l-4 4z" fill="#6a6a6a"/></svg>
<svg class="a" style="left:920px;top:20px" width="16" height="14"><path d="M0 9h15M8 9V4" stroke="#6a6a6a" stroke-width="2" fill="none"/><path d="M4 5h8L8 1z" fill="#6a6a6a"/></svg>
<svg class="a" style="left:942px;top:23px" width="16" height="12"><path d="M0 6h11" stroke="#6a6a6a" stroke-width="2"/><path d="M10 1.5l5.5 4.5-5.5 4.5z" fill="#6a6a6a"/></svg>
<div class="a" style="left:964px;top:22px;width:1px;height:15px;background:#3a3a3a"></div><div class="a" style="left:965px;top:22px;width:1px;height:15px;background:#f4f4f4"></div>
<svg class="a" style="left:972px;top:23px" width="17" height="12"><path d="M0 6h6M6.5 0v12M11.5 0v12M11 6h6" stroke="#6a6a6a" stroke-width="2" fill="none"/></svg>
<svg class="a" style="left:993px;top:23px" width="8" height="12"><path d="M7 2a4 4 0 0 0 0 8M0 6h3" stroke="#6a6a6a" stroke-width="1.8" fill="none"/></svg>
<svg class="a" style="left:271px;top:43px" width="12" height="17"><path d="M8.5 4.5v8L3 8.5z" fill="none" stroke="#555" stroke-width="1"/></svg>
<div class="a" style="left:269px;top:61px;width:730px;height:1px;background:#9a9ea4"></div>
<svg class="a" style="left:285px;top:43px" width="210" height="20"><defs><linearGradient id="tb1" x1="0" y1="0" x2="0" y2="1"><stop offset="0" stop-color="#f8fcff"/><stop offset=".48" stop-color="#e6f2fc"/><stop offset=".52" stop-color="#cfdef6"/><stop offset="1" stop-color="#bcd0f0"/></linearGradient><linearGradient id="tb2" x1="0" y1="0" x2="0" y2="1"><stop offset="0" stop-color="#fff8b8"/><stop offset=".48" stop-color="#ffee98"/><stop offset=".52" stop-color="#ffdc84"/><stop offset="1" stop-color="#fcd070"/></linearGradient><linearGradient id="tb3" x1="0" y1="0" x2="0" y2="1"><stop offset="0" stop-color="#f0f8de"/><stop offset=".48" stop-color="#e2eecc"/><stop offset=".52" stop-color="#cedcb2"/><stop offset="1" stop-color="#c0d0a0"/></linearGradient></defs><path d="M1.5 18L18.5 0.5H70a2 2 0 0 1 2 2V18z" fill="url(#tb1)"/><path d="M1.5 18L18.5 0.5" fill="none" stroke="#6a6e74" stroke-width="1"/><path d="M18.5 1H70" fill="none" stroke="#ffffff" stroke-width="1"/><path d="M18.5 0.5H70" fill="none" stroke="#8a9098" stroke-width=".5"/><path d="M3.5 18L19 2" fill="none" stroke="#ffffff" stroke-width="1"/><path d="M72.5 18V2.5a2 2 0 0 1 2-2H127a2 2 0 0 1 2 1.5L115 18z" fill="url(#tb2)"/><path d="M72.5 18V2.5a2 2 0 0 1 2-2H127" fill="none" stroke="#8a8a80" stroke-width=".8"/><path d="M115 19L131.5 0.5H200a2.5 2.5 0 0 1 2.5 2.5V19z" fill="url(#tb3)"/><path d="M115 19L131.5 0.5" fill="none" stroke="#5a6050" stroke-width="1"/><path d="M131.5 1H200" fill="none" stroke="#fbfff4" stroke-width="1"/><path d="M131.5 0.5H200" fill="none" stroke="#9aa09a" stroke-width=".5"/><path d="M117 19L132.5 2" fill="none" stroke="#f8fff0" stroke-width="1"/><path d="M202.5 3v16" stroke="#6a6e64" stroke-width="1"/></svg>
<div class="t" style="left:317px;top:45px;font-size:11px;color:#101040">MAIN</div>
<div class="t" style="left:373px;top:45px;font-size:11px;letter-spacing:-0.3px;transform:scaleX(.9);transform-origin:0 0;color:#101040">SBR_0</div>
<div class="t" style="left:432px;top:45px;font-size:11.5px;letter-spacing:-0.5px;font-weight:bold;color:#101010">INT_0</div>
<svg class="a" style="left:474px;top:49px" width="9" height="9"><path d="M1 1.5l7 7M8 1.5L1 8.5" stroke="#3a3a3a" stroke-width="1.3"/></svg>
<div class="a" style="left:269px;top:63px;width:730px;height:511px;background:#fff"></div>
<div class="a" style="left:269px;top:62px;width:1px;height:512px;background:#b0b6a8"></div>
<div class="a" style="left:270px;top:62px;width:2px;height:512px;background:#bfd0a0"></div>
<div class="a" style="left:270px;top:62px;width:729px;height:1px;background:#c4d8a8"></div>
<div class="a hatch" style="left:272px;top:63px;width:23px;height:505px"></div>
<div class="sep" style="top:85px"></div>
<div class="sep" style="top:307px"></div>
<div class="sep" style="top:529px"></div>
<div class="rail" style="top:68px;height:13px"></div>
<div class="rail" style="top:90px;height:213px"></div>
<div class="rail" style="top:312px;height:213px"></div>
<div class="rail" style="top:534px;height:34px"></div>
<div class="num" style="top:90px">1</div>
<div class="num" style="top:312px">2</div>
<div class="num" style="top:534px">3</div>
<div class="t g" style="left:305px;top:68px">通讯口0接收中断程序</div>
<div class="t g" style="left:305px;top:90px">信息超时默认成功，VB200计数接收次数</div>
<div class="t g" style="left:305px;top:312px">开始新的RCV指令</div>
<div class="t" style="left:305px;top:534px;color:#8a8a8a">输入注释</div>
<div class="t lg" style="left:305px;top:114px;font-size:11px">P0_Stat_~:SM86.2</div>
<div class="a" style="left:300px;top:139px;width:34px;height:2px;background:#0000f0"></div>
<div class="a" style="left:333px;top:130px;width:2px;height:20px;background:#0000f0"></div>
<div class="a" style="left:364px;top:130px;width:2px;height:20px;background:#c0c0c0"></div>
<div class="wl" style="left:366px;top:139px;width:138px"></div>
<div class="box" style="left:504px;top:114px;width:93px;height:69px"></div>
<div class="t" style="left:500px;width:100px;text-align:center;top:114px;font-size:11px;">INC_B</div>
<div class="t " style="left:508px;top:132px;font-size:11px;">EN</div>
<div class="t " style="right:406px;top:132px;font-size:11px;">ENO</div>
<div class="t " style="left:508px;top:168px;font-size:11px;">Sy~:VB~Sy~:VB~</div>
<div class="wl" style="left:597px;top:139px;width:53px"></div>
<svg class="a" style="left:639px;top:129px" width="12" height="22"><path d="M1 1.5l9 9.5-9 9.5M10.5 0v21" stroke="#c0c0c0" stroke-width="2" fill="none"/></svg>
<div class="t lg" style="right:501px;top:168px;font-size:11px;">Symbol_6:VB200</div>
<div class="wl" style="left:499px;top:175px;width:5px"></div>
<div class="wl" style="left:597px;top:175px;width:5px"></div>
<div class="t lg" style="left:604px;top:168px;font-size:11px;">Symbol_6:VB200</div>
<div class="t lg" style="left:305px;top:336px;font-size:11px">Always_On:SM0.0</div>
<div class="a" style="left:300px;top:361px;width:34px;height:2px;background:#0000f0"></div>
<div class="a" style="left:333px;top:352px;width:2px;height:20px;background:#0000f0"></div>
<div class="a" style="left:364px;top:352px;width:2px;height:20px;background:#c0c0c0"></div>
<div class="wl" style="left:366px;top:361px;width:138px"></div>
<div class="box" style="left:504px;top:335px;width:93px;height:87px"></div>
<div class="t" style="left:500px;width:100px;text-align:center;top:335px;font-size:11px;">RCV</div>
<div class="t " style="left:508px;top:354px;font-size:11px;">EN</div>
<div class="t " style="right:406px;top:354px;font-size:11px;">ENO</div>
<div class="wl" style="left:597px;top:361px;width:53px"></div>
<svg class="a" style="left:639px;top:351px" width="12" height="22"><path d="M1 1.5l9 9.5-9 9.5M10.5 0v21" stroke="#c0c0c0" stroke-width="2" fill="none"/></svg>
<div class="t " style="left:508px;top:389px;font-size:11px;">Sy~:VB~</div>
<div class="t " style="left:508px;top:407px;font-size:11px;">PORT</div>
<div class="t lg" style="right:501px;top:389px;font-size:11px;">Symbol_2:VB100</div>
<div class="wl" style="left:499px;top:396px;width:5px"></div>
<div class="t lg" style="right:501px;top:407px;font-size:11px;">0</div>
<div class="wl" style="left:499px;top:414px;width:5px"></div>
<div class="a" style="left:800px;top:388px;width:101px;height:54px;border:1px solid #000"></div>
<div class="a" style="left:305px;top:244px;width:700px;height:48px;border:1px solid #8a8a8a;background:#fff"></div>
<div class="th" style="left:306px;top:245px;width:700px;height:16px"></div>
<div class="cl" style="left:306px;top:261px;width:700px;height:1px"></div>
<div class="cl" style="left:306px;top:276px;width:700px;height:1px"></div>
<div class="cl" style="left:430px;top:244px;width:1px;height:48px"></div>
<div class="cl" style="left:530px;top:244px;width:1px;height:48px"></div>
<div class="t" style="left:309px;top:246px;font-size:12px;color:#000">符号</div>
<div class="t" style="left:434px;top:246px;font-size:12px;color:#000">地址</div>
<div class="t" style="left:534px;top:246px;font-size:12px;color:#000">注释</div>
<div class="t" style="left:309px;top:261px;font-size:11px">P0_Stat_Rcv_2</div>
<div class="t" style="left:434px;top:261px;font-size:11px">SM86.2</div>
<div class="t g" style="left:534px;top:262px;font-size:12px">1 = 接收消息终止：定时器时间到</div>
<div class="t" style="left:309px;top:276px;font-size:11px">Symbol_6</div>
<div class="t" style="left:434px;top:276px;font-size:11px">VB200</div>
<div class="t g" style="left:534px;top:277px;font-size:12px">累积次数</div>
<div class="a" style="left:305px;top:466px;width:700px;height:48px;border:1px solid #8a8a8a;background:#fff"></div>
<div class="th" style="left:306px;top:467px;width:700px;height:16px"></div>
<div class="cl" style="left:306px;top:483px;width:700px;height:1px"></div>
<div class="cl" style="left:306px;top:498px;width:700px;height:1px"></div>
<div class="cl" style="left:430px;top:466px;width:1px;height:48px"></div>
<div class="cl" style="left:530px;top:466px;width:1px;height:48px"></div>
<div class="t" style="left:309px;top:468px;font-size:12px;color:#000">符号</div>
<div class="t" style="left:434px;top:468px;font-size:12px;color:#000">地址</div>
<div class="t" style="left:534px;top:468px;font-size:12px;color:#000">注释</div>
<div class="t" style="left:309px;top:483px;font-size:11px">Always_On</div>
<div class="t" style="left:434px;top:483px;font-size:11px">SM0.0</div>
<div class="t g" style="left:534px;top:484px;font-size:12px">始终接通</div>
<div class="t" style="left:309px;top:498px;font-size:11px">Symbol_2</div>
<div class="t" style="left:434px;top:498px;font-size:11px">VB100</div>
<div class="t g" style="left:534px;top:499px;font-size:12px">启用具有 VB100 缓冲区的接收功能框</div>
<div class="a" style="left:272px;top:568px;width:727px;height:6px;background:#e8e8e8"></div>
<svg class="a" style="left:279px;top:572px" width="5" height="3"><path d="M2.5 0L0 2.5h5z" fill="#222"/></svg>
<div class="a" style="left:291px;top:569px;width:708px;height:5px;border:1px solid #8a8a8a;border-right:0;border-bottom:0;border-radius:2px 0 0 0;background:linear-gradient(#fafafa,#e8e8e8)"></div>
<div class="a" style="left:682px;top:573px;width:2px;height:2px;background:#222;box-shadow:3px 0 0 #222,6px 0 0 #222"></div>
</body></html>
